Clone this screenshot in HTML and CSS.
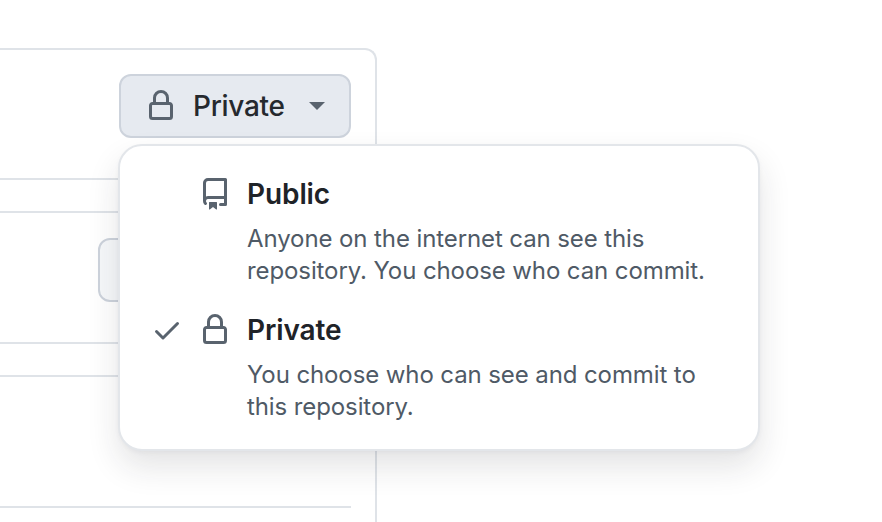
FILE: index.html
```html
<!DOCTYPE html>
<html lang="en">
<head>
    <meta charset="UTF-8">
    <title>Repository visibility</title>
    <link rel="stylesheet" href="styles.css">
</head>
<body>
    <div class="card">
        <div class="card-head">
            <button class="visibility-btn">
                <svg class="icon" viewBox="0 0 16 16" width="32" height="32"><path d="M4 4a4 4 0 0 1 8 0v2h.25c.966 0 1.75.784 1.75 1.75v5.5A1.75 1.75 0 0 1 12.25 15h-8.5A1.75 1.75 0 0 1 2 13.25v-5.5C2 6.784 2.784 6 3.75 6H4Zm6.5 2V4a2.5 2.5 0 1 0-5 0v2ZM3.5 7.75v5.5c0 .138.112.25.25.25h8.5a.25.25 0 0 0 .25-.25v-5.5a.25.25 0 0 0-.25-.25h-8.5a.25.25 0 0 0-.25.25Z"/></svg>
                <span>Private</span>
                <span class="caret"></span>
            </button>
        </div>
        <div class="strip"></div>
        <div class="section">
            <div class="ghost-btn"></div>
        </div>
        <div class="strip"></div>
        <div class="section"></div>
    </div>

    <div class="menu">
        <div class="menu-item">
            <div class="check"></div>
            <svg class="icon" viewBox="0 0 16 16" width="32" height="32"><path d="M2 2.5A2.5 2.5 0 0 1 4.5 0h8.75a.75.75 0 0 1 .75.75v12.5a.75.75 0 0 1-.75.75h-2.5a.75.75 0 0 1 0-1.5h1.75v-2h-8a1 1 0 0 0-.714 1.7.75.75 0 1 1-1.072 1.05A2.495 2.495 0 0 1 2 11.5Zm10.5-1h-8a1 1 0 0 0-1 1v6.708A2.486 2.486 0 0 1 4.5 9h8ZM5 12.25a.25.25 0 0 1 .25-.25h3.5a.25.25 0 0 1 .25.25v3.25a.25.25 0 0 1-.4.2l-1.45-1.087a.249.249 0 0 0-.3 0L5.4 15.7a.25.25 0 0 1-.4-.2Z"/></svg>
            <div class="menu-text">
                <div class="menu-title">Public</div>
                <div class="menu-desc">Anyone on the internet can see this repository. You choose who can commit.</div>
            </div>
        </div>
        <div class="menu-item">
            <div class="check">
                <svg class="icon" viewBox="0 0 16 16" width="32" height="32"><path d="M13.78 4.22a.75.75 0 0 1 0 1.06l-7.25 7.25a.75.75 0 0 1-1.06 0L2.22 9.28a.751.751 0 0 1 .018-1.042.751.751 0 0 1 1.042-.018L6 10.94l6.72-6.72a.75.75 0 0 1 1.06 0Z"/></svg>
            </div>
            <svg class="icon" viewBox="0 0 16 16" width="32" height="32"><path d="M4 4a4 4 0 0 1 8 0v2h.25c.966 0 1.75.784 1.75 1.75v5.5A1.75 1.75 0 0 1 12.25 15h-8.5A1.75 1.75 0 0 1 2 13.25v-5.5C2 6.784 2.784 6 3.75 6H4Zm6.5 2V4a2.5 2.5 0 1 0-5 0v2ZM3.5 7.75v5.5c0 .138.112.25.25.25h8.5a.25.25 0 0 0 .25-.25v-5.5a.25.25 0 0 0-.25-.25h-8.5a.25.25 0 0 0-.25.25Z"/></svg>
            <div class="menu-text">
                <div class="menu-title">Private</div>
                <div class="menu-desc">You choose who can see and commit to this repository.</div>
            </div>
        </div>
    </div>
</body>
</html>
```

FILE: styles.css
```css
html, body {
    height: 100%;
    overflow: hidden;
}

body {
    margin: 0;
    padding-top: 48px;
    box-sizing: border-box;
    background: #fff;
    font-family: Inter, "Noto Sans", sans-serif;
    color: #1f2328;
    position: relative;
}

.card {
    width: 377px;
    height: 100%;
    box-sizing: border-box;
    border: 2px solid #dfe3e8;
    border-left: none;
    border-bottom: none;
    border-top-right-radius: 12px;
    padding-right: 24px;
}

.card-head {
    display: flex;
    justify-content: flex-end;
    padding-top: 24px;
    height: 130px;
    box-sizing: border-box;
    border-bottom: 2px solid #dfe3e8;
}

.visibility-btn {
    width: 232px;
    height: 64px;
    box-sizing: border-box;
    display: flex;
    align-items: center;
    padding: 0 24px;
    background: #e6eaf0;
    border: 2px solid #cdd3dc;
    border-radius: 12px;
    font: 500 28px Inter, "Noto Sans", sans-serif;
    letter-spacing: -0.3px;
    color: #25292e;
}

.visibility-btn .icon {
    margin-right: 16px;
}

.caret {
    margin-left: 24px;
    border-top: 8px solid #59636e;
    border-left: 8px solid transparent;
    border-right: 8px solid transparent;
}

.icon {
    fill: #59636e;
    flex: none;
}

.strip {
    height: 31px;
    border-bottom: 2px solid #dfe3e8;
}

.section {
    height: 131px;
    box-sizing: border-box;
    border-bottom: 2px solid #dfe3e8;
    padding-top: 25px;
}

.ghost-btn {
    margin-left: 98px;
    height: 64px;
    box-sizing: border-box;
    background: #f6f8fa;
    border: 2px solid #cdd3dc;
    border-radius: 12px;
}

.menu {
    position: absolute;
    left: 118px;
    top: 144px;
    width: 642px;
    height: 307px;
    box-sizing: border-box;
    padding: 32px 40px 0 31px;
    background: #fff;
    border: 2px solid #e3e6ea;
    border-radius: 24px;
    box-shadow: 0 16px 32px rgba(31, 35, 40, 0.12), 0 2px 4px rgba(31, 35, 40, 0.04);
}

.menu-item {
    display: flex;
    align-items: flex-start;
    margin-bottom: 27px;
}

.check {
    flex: none;
    width: 32px;
    height: 32px;
    margin-right: 16px;
}

.menu-text {
    margin-left: 16px;
}

.menu-title {
    font-size: 28px;
    font-weight: 600;
    line-height: 32px;
    letter-spacing: -0.1px;
    margin-bottom: 13px;
    color: #1f2328;
}

.menu-desc {
    font-size: 24px;
    line-height: 32px;
    letter-spacing: -0.1px;
    color: #4f5a66;
}
```
